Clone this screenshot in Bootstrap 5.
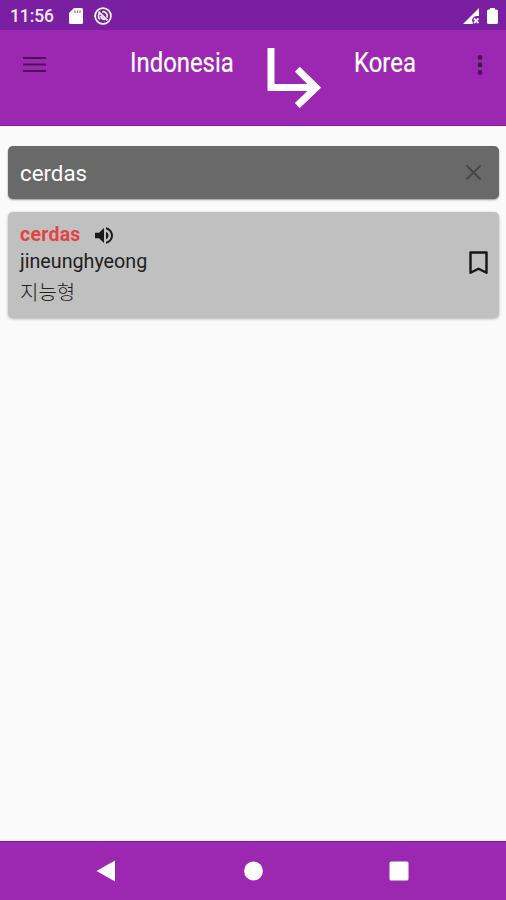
<!DOCTYPE html>
<html lang="id">
<head>
<meta charset="utf-8">
<meta name="viewport" content="width=device-width, initial-scale=1">
<title>Kamus Indonesia Korea</title>
<link href="https://cdn.jsdelivr.net/npm/bootstrap@5.3.0/dist/css/bootstrap.min.css" rel="stylesheet">
<style>
body{font-family:Roboto,"Noto Sans CJK KR",sans-serif;background:#fafafa;line-height:1.2}
svg{display:block;flex:none}
.status-bar{height:30px;background:#7b1fa2;padding:1px 8px 0 10px}
.clock{width:43px;white-space:nowrap;font-size:17.500px;font-weight:500;opacity:.9;padding-top:2px;letter-spacing:-.1px}
.aim-icon{margin-left:11px}
.app-bar{height:96px;background:#9c27b0;padding:0 13px 0 23px;border-bottom:1px solid #8c129f}
.menu-icon{margin-top:26px}
.arrow-icon{margin-top:18px}
.more-icon{margin-top:25px}
.lang-name{font-size:27.5px;line-height:32px;color:#fff;margin-top:17px;white-space:nowrap;-webkit-text-stroke:.2px #fff}
.lang-name span{display:inline-block;transform-origin:0 50%}
.from-lang{width:137px;margin-left:84px}
.from-lang span{transform:scaleX(.868)}
.to-lang{width:123px;margin-left:33px}
.to-lang span{transform:scaleX(.87)}
.search-box{height:53px;background:#696969;border-radius:5px;padding:1px 17px 0 12px;box-shadow:0 1px 2px rgba(0,0,0,.4)}
.search-box input{font-size:22.300px;color:#fff;outline:0;line-height:28px}
.clear-icon{margin-top:-1px}
.result{height:106px;margin-top:13px;background:#c0c0c0;border-radius:5px;padding:10px 11px 0 12px;box-shadow:0 1px 3px rgba(0,0,0,.3);color:#212121}
.term{font-size:19.5px;font-weight:700;color:#e24444;line-height:26px;width:75px;letter-spacing:.25px}
.sound-icon{margin-top:1px}
.roman{font-size:19.700px;line-height:28px}
.hangul{font-size:20px;line-height:32px;font-family:"Noto Sans CJK KR",sans-serif;font-weight:300}
.mark-icon{margin-top:29px}
.page{padding:20px 7px 0 8px}
.nav-keys{height:59px;background:#9c27b0;border-top:1px solid #8c129f;padding:0 97px 0 96px}
</style>
<script src="https://cdn.jsdelivr.net/npm/bootstrap@5.3.0/dist/js/bootstrap.bundle.min.js"></script>
</head>
<body class="d-flex flex-column vh-100 overflow-hidden">
<div class="status-bar d-flex align-items-center text-white">
  <span class="clock">11:56</span>
  <svg class="ms-3" width="14" height="16" viewBox="0 0 14 16"><path fill="#fff" d="M5 0h7.500Q14 0 14 1.500v13Q14 16 12.500 16h-11Q0 16 0 14.500V5z"/><path stroke="#7b1fa2" stroke-opacity=".7" stroke-width="1.200" d="M6 2.500v2.500M8.500 2.500v2.500M11 2.500v2.500"/></svg>
  <svg class="aim-icon" width="18" height="18" viewBox="0 0 18 18" fill="none" stroke="#fff"><circle cx="9" cy="9" r="7.900" stroke-width="1.700"/><path stroke-width="1.700" d="M5.800 12.300A4.600 4.600 0 0 1 6 5.600M8.300 4.700a4.400 4.400 0 0 1 4.700 5.800M4.500 4.700 13.500 13.300M6.700 9.200q1.500 3.500 4.300 3.300"/></svg>
  <svg class="ms-auto" width="16" height="16" viewBox="0 0 16 16"><path fill="#fff" d="M0 16 16 0v8h-2q-4 0-5 4l1 4z"/><path stroke="#fff" stroke-width="1.800" d="m11 10.500 4.500 4.500m0-4.500-4.500 4.500"/></svg>
  <svg class="ms-2" width="11" height="16" viewBox="0 0 11 16"><path fill="#fff" d="M3 0h5v1.500h1.500Q11 1.500 11 3v11.500Q11 16 9.500 16h-8Q0 16 0 14.500V3Q0 1.500 1.500 1.500H3z"/></svg>
</div>
<header class="app-bar d-flex align-items-start">
  <svg class="menu-icon" width="23" height="17" viewBox="0 0 23 17"><path stroke="#4d1058" stroke-width="2.200" d="M0 2h23M0 8.500h23M0 15h23"/></svg>
  <div class="lang-name from-lang"><span>Indonesia</span></div>
  <svg class="arrow-icon" width="54" height="60" viewBox="0 0 54 60" fill="none" stroke="#fff" stroke-width="7"><path d="M4 0v39.600h46"/><path d="m30.300 21.300 18.700 18.300-18.700 18"/></svg>
  <div class="lang-name to-lang"><span>Korea</span></div>
  <svg class="more-icon" width="6" height="20" viewBox="0 0 6 20" fill="#4d1058"><circle cx="3" cy="2.500" r="2.400"/><circle cx="3" cy="10" r="2.400"/><circle cx="3" cy="17.500" r="2.400"/></svg>
</header>
<main class="page flex-grow-1">
  <div class="search-box d-flex align-items-center">
    <input class="flex-grow-1 border-0 bg-transparent p-0" type="text" value="cerdas" aria-label="Cari" spellcheck="false">
    <svg class="clear-icon" width="17" height="17" viewBox="0 0 17 17"><path stroke="#474747" stroke-width="1.900" d="m1.500 1.500 14 14m0-14-14 14"/></svg>
  </div>
  <div class="result d-flex">
    <div class="flex-grow-1">
      <div class="d-flex align-items-center"><span class="term">cerdas</span>
        <svg class="sound-icon" width="18" height="17" viewBox="3 3 18 18" preserveAspectRatio="none" fill="#1a1a1a"><path d="M3 9v6h4l5 5V4L7 9H3zm13.500 3c0-1.770-1.020-3.290-2.500-4.030v8.050c1.480-.73 2.500-2.250 2.500-4.020zM14 3.230v2.060c2.890.86 5 3.540 5 6.710s-2.110 5.850-5 6.710v2.060c4.010-.91 7-4.490 7-8.770s-2.990-7.860-7-8.770z"/></svg>
      </div>
      <div class="roman">jineunghyeong</div>
      <div class="hangul">지능형</div>
    </div>
    <svg class="mark-icon" width="19" height="24" viewBox="0 0 19 24"><path fill="none" stroke="#151515" stroke-width="2.400" stroke-linejoin="round" d="M1.500 1.500h16v20.300l-8-4-8 4z"/></svg>
  </div>
</main>
<footer class="nav-keys d-flex align-items-center justify-content-between">
  <svg width="20" height="22" viewBox="0 0 20 22"><path fill="#fff" d="M19 .5v21L.5 11z"/></svg>
  <svg width="20" height="20" viewBox="0 0 20 20"><circle cx="10.500" cy="10" r="9.400" fill="#fff"/></svg>
  <svg width="20" height="20" viewBox="0 0 20 20"><rect x=".5" y=".5" width="19" height="19" rx="1.500" fill="#fff"/></svg>
</footer>
</body>
</html>
